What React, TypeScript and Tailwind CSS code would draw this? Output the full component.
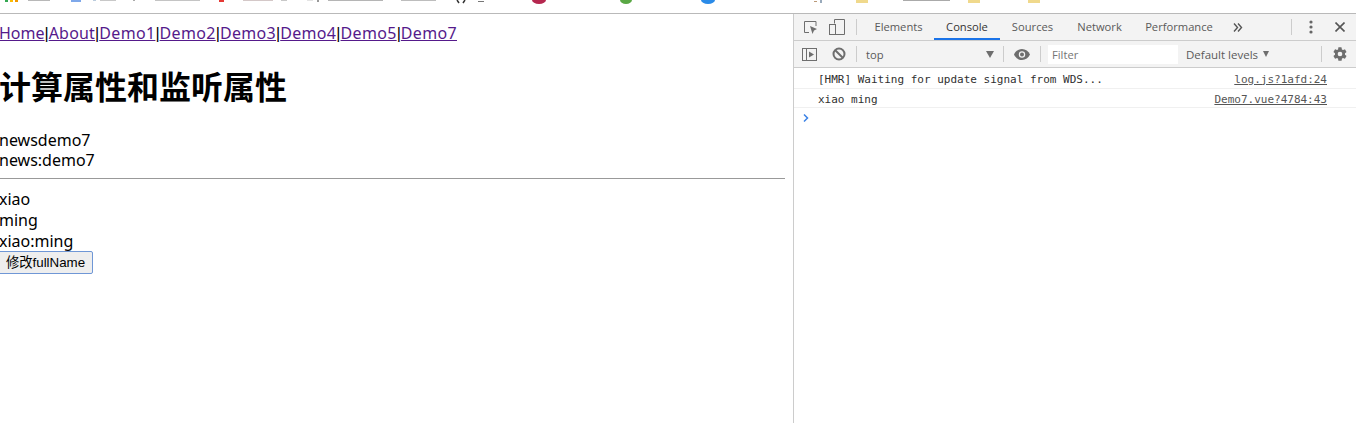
import { ReactNode } from "react";

const links = [
  { label: "Home", cls: "" },
  { label: "About", cls: "tracking-[0.2px]" },
  { label: "Demo1", cls: "tracking-[0.33px]" },
  { label: "Demo2", cls: "tracking-[0.33px]" },
  { label: "Demo3", cls: "tracking-[0.33px]" },
  { label: "Demo4", cls: "tracking-[0.33px]" },
  { label: "Demo5", cls: "tracking-[0.33px]" },
  { label: "Demo7", cls: "tracking-[0.33px]" },
];

// clipped bottoms of the browser's bookmarks bar
function BookmarkScraps() {
  const scraps: [number, number, number, number, string][] = [
    [5, 0, 3, 2, "#34a853"], [10, 0, 3, 2, "#fbbc05"], [15, 0, 3, 2, "#f29900"],
    [28, 0, 22, 1, "#b8b8b8"], [71, 0, 10, 2, "#7ea8ea"], [93, 0, 3, 1, "#bcd"], [100, 0, 16, 1, "#c8c8c8"],
    [133, 0, 2, 1, "#aaa"], [155, 0, 45, 1, "#c4c4c4"], [219, 0, 5, 2, "#e53935"], [243, 0, 30, 1, "#d4c8c8"],
    [281, 0, 6, 1, "#c8c8c8"], [307, 0, 6, 1, "#e4e4e4"], [317, 0, 2, 2, "#999"], [328, 0, 55, 1, "#b5b5b5"],
    [401, 0, 35, 1, "#bdbdbd"], [478, 1, 6, 1, "#777"], [814, 1, 3, 1, "#b97"], [820, 0, 2, 3, "#9ab"],
    [856, 0, 12, 3, "#f0d98c"], [903, 0, 47, 1, "#aaaaaa"], [968, 0, 12, 3, "#f0d98c"], [1028, 0, 12, 3, "#f0d98c"],
  ];
  return (
    <svg width="1356" height="13" className="block">
      {scraps.map(([x, y, w, h, c], i) => <rect key={i} x={x} y={y} width={w} height={h} fill={c} />)}
      <ellipse cx="539" cy="0" rx="7" ry="4" fill="#b5274f" />
      <ellipse cx="626" cy="0" rx="6" ry="4" fill="#5aa845" />
      <ellipse cx="708" cy="0" rx="7" ry="4" fill="#2b8be8" />
      <path d="M457 0l2 3M465 0l-2 3" stroke="#333" strokeWidth="1.500" />
    </svg>
  );
}

function Sep() {
  return <div className="w-px h-4 bg-[#cccccc]" />;
}

function Tab({ children, active, w }: { children: ReactNode; active?: boolean; w: string }) {
  return (
    <div className={`${w} h-full flex items-center justify-center border-b-2 pt-[2px] ${active ? "border-[#1a73e8] text-[#333333]" : "border-transparent text-[#5a5a5a]"}`}>
      {children}
    </div>
  );
}

function LogRow({ text, source, h }: { text: string; source: string; h: string }) {
  return (
    <div className={`${h} flex items-center justify-between pl-6 pr-[29px] pt-1 border-b border-[#f0f0f0] text-[11px] text-[#303030] font-['DejaVu_Sans_Mono',monospace]`}>
      <span>{text}</span>
      <a className="underline text-[#555555]">{source}</a>
    </div>
  );
}

function DevTools() {
  return (
    <div className="flex-1 flex flex-col border-l border-[#cccccc] text-[11.2px] font-['Open_Sans',sans-serif]">
      <div className="h-[27px] flex items-center bg-[#f3f3f3] border-b border-[#cccccc]">
        <div className="w-[63px] h-full flex items-center pl-[9px] gap-[11px] text-[#6e6e6e]">
          <svg width="15" height="15" viewBox="0 0 15 15" fill="none" stroke="#6e6e6e">
            <path d="M6 12.500H1.500V1.500H13V6" />
            <path d="M7 6l7 3-3 1.500L9.500 14z" fill="#6e6e6e" stroke="none" />
          </svg>
          <svg width="16" height="16" viewBox="0 0 16 16" fill="none" stroke="#6e6e6e">
            <path d="M5.500 4.500V.5h10v15H5.500" />
            <rect x=".5" y="5.500" width="6" height="10" fill="#f3f3f3" />
          </svg>
        </div>
        <div className="w-px h-4 bg-[#cccccc] -ml-px" />
        <div className="h-full flex">
          <Tab w="w-[77px] pl-[6px]">Elements</Tab>
          <Tab w="w-[66px]" active>Console</Tab>
          <Tab w="w-[65px]">Sources</Tab>
          <Tab w="w-[69px]">Network</Tab>
          <Tab w="w-[90px]">Performance</Tab>
        </div>
        <svg width="10" height="9" viewBox="0 0 10 9" className="ml-[9px]" fill="none" stroke="#555555" strokeWidth="1.400">
          <path d="M1 .5l3.500 4L1 8.500M5 .5l3.500 4L5 8.500" />
        </svg>
        <div className="flex-1" />
        <Sep />
        <svg width="4" height="14" viewBox="0 0 4 14" className="ml-[17px]" fill="#666666">
          <circle cx="2" cy="2" r="1.600" /><circle cx="2" cy="7" r="1.600" /><circle cx="2" cy="12" r="1.600" />
        </svg>
        <svg width="10" height="10" viewBox="0 0 10 10" className="ml-[22px] mr-[11px]" stroke="#555555" strokeWidth="1.600">
          <path d="M.5.5l9 9M9.500.5l-9 9" />
        </svg>
      </div>

      <div className="h-[27px] flex items-center bg-[#f3f3f3] border-b border-[#cccccc] text-[#5a5a5a]">
        <svg width="15" height="13" viewBox="0 0 15 13" className="ml-2" fill="none" stroke="#6e6e6e">
          <rect x=".5" y=".5" width="14" height="12" /><path d="M4.500 .5v12" /><path d="M7 3.500l5 3-5 3z" fill="#6e6e6e" stroke="none" />
        </svg>
        <svg width="14" height="14" viewBox="0 0 14 14" className="ml-[15px] mr-[10px]" fill="none" stroke="#6e6e6e" strokeWidth="2">
          <circle cx="7" cy="7" r="5.500" /><path d="M3 3l8 8" />
        </svg>
        <Sep />
        <div className="w-[146px] pl-[9px] flex items-center justify-between pr-[9px] pt-[2px]">
          <span>top</span>
          <span className="w-0 h-0 border-x-[4px] border-x-transparent border-t-[7px] border-t-[#6e6e6e]" />
        </div>
        <Sep />
        <svg width="16" height="11" viewBox="0 0 16 11" className="ml-[10px] mr-[10px]">
          <path d="M8 0C4.500 0 1.500 2.200 0 5.500 1.500 8.800 4.500 11 8 11s6.500-2.200 8-5.500C14.500 2.200 11.500 0 8 0z" fill="#6e6e6e" />
          <circle cx="8" cy="5.500" r="3.200" fill="#f3f3f3" /><circle cx="8" cy="5.500" r="2" fill="#6e6e6e" />
        </svg>
        <Sep />
        <div className="w-[130px] h-[19px] ml-[7px] bg-white pl-1 flex items-center text-[#757575] pt-[2px]">Filter</div>
        <span className="ml-2 pt-[2px] text-[11.5px]">Default levels</span>
        <span className="ml-[5px] w-0 h-0 border-x-[3.500px] border-x-transparent border-t-[6px] border-t-[#6e6e6e]" />
        <div className="flex-1" />
        <Sep />
        <svg width="16" height="16" viewBox="0 0 24 24" className="ml-[10px] mr-[8px]" fill="#6e6e6e">
          <path d="M19.400 13c.04-.3.100-.700.100-1s-.03-.700-.100-1l2.100-1.600c.200-.150.250-.400.120-.640l-2-3.460c-.120-.220-.390-.300-.610-.220l-2.490 1c-.520-.400-1.060-.730-1.690-.980l-.370-2.650A.506.506 0 0 0 14 2h-4c-.250 0-.460.180-.490.420l-.370 2.650c-.630.250-1.170.590-1.690.980l-2.490-1c-.230-.090-.490 0-.610.220l-2 3.460c-.130.220-.070.490.120.640L4.570 11c-.040.320-.070.650-.070 1s.030.680.070 1l-2.110 1.650c-.190.150-.240.420-.120.640l2 3.460c.120.220.390.300.610.220l2.490-1c.520.400 1.060.730 1.690.980l.370 2.650c.030.240.240.420.490.420h4c.250 0 .460-.180.490-.420l.370-2.650c.630-.260 1.170-.590 1.690-.980l2.490 1c.230.090.490 0 .610-.220l2-3.460c.120-.220.070-.490-.120-.640L19.400 13zM12 15.500a3.500 3.500 0 1 1 0-7 3.500 3.500 0 0 1 0 7z" />
        </svg>
      </div>

      <LogRow h="h-[21px]" text="[HMR] Waiting for update signal from WDS..." source="log.js?1afd:24" />
      <LogRow h="h-[19px]" text="xiao ming" source="Demo7.vue?4784:43" />
      <div className="h-5 pl-[9px] flex items-center">
        <svg width="6" height="8" viewBox="0 0 6 8" fill="none" stroke="#3b82e6" strokeWidth="1.500"><path d="M1 .5L4.500 4 1 7.500" /></svg>
      </div>
    </div>
  );
}

function Page() {
  return (
    <div className="w-[793px] shrink-0 pr-2 text-base leading-[21px] text-black font-['Noto_Sans','Noto_Sans_CJK_SC',sans-serif]">
      <div className="pt-[9px] -ml-px">
        {links.map((l, i) => (
          <span key={l.label}>
            {i > 0 && <span className="font-['Liberation_Sans',sans-serif]">|</span>}
            <a className={`underline text-[#551a8b] ${l.cls}`}>{l.label}</a>
          </span>
        ))}
      </div>
      <h1 className="text-[32px] leading-[37px] font-bold mt-6 mb-[25px] -ml-px">计算属性和监听属性</h1>
      <div className="-ml-px">newsdemo7</div>
      <div className="-ml-px -mt-px">news:demo7</div>
      <hr className="mt-[7px] mb-[10px] border-t border-[#999999]" />
      <div className="-ml-px">xiao</div>
      <div className="-ml-px">ming</div>
      <div className="-ml-px">xiao:ming</div>
      <button className="block -ml-[2px] -mt-px pt-px h-[23px] w-[95px] text-[13.33px] leading-none font-['Liberation_Sans','Noto_Sans_CJK_SC',sans-serif] bg-[#eeeeee] border border-[#6f97d6] rounded-[2px]">修改fullName</button>
    </div>
  );
}

export default function App() {
  return (
    <div className="h-[423px] overflow-hidden bg-white flex flex-col">
      <div className="h-[13px] shrink-0"><BookmarkScraps /></div>
      <div className="flex-1 flex border-t border-[#b9b9b9] min-h-0">
        <Page />
        <DevTools />
      </div>
    </div>
  );
}
